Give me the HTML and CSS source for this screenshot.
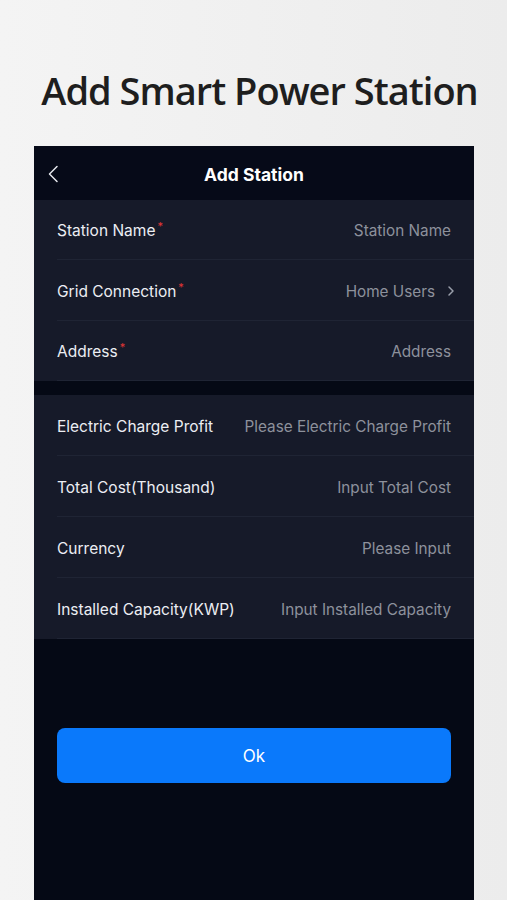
FILE: index.html
```html
<!DOCTYPE html>
<html lang="en">
<head>
  <meta charset="UTF-8" />
  <title>Add Smart Power Station</title>
  <meta name="viewport" content="width=device-width, initial-scale=1" />
  <link rel="stylesheet" href="styles.css">
</head>
<body>
  <h1 class="promo-title">Add Smart Power Station</h1>

  <div class="phone">
    <div class="topbar">
      <svg class="back" width="12" height="18" viewBox="0 0 12 18"><path d="M10 1.5 L2.5 9 L10 16.5" fill="none" stroke="#e6e8ee" stroke-width="1.5" stroke-linecap="round" stroke-linejoin="round"/></svg>
      <span class="topbar-title">Add Station</span>
    </div>

    <div class="group group-required">
      <div class="row">
        <span class="label">Station Name<sup class="req">*</sup></span>
        <span class="value">Station Name</span>
      </div>
      <div class="row">
        <span class="label">Grid Connection<sup class="req">*</sup></span>
        <span class="value">Home Users
          <svg class="chev" width="8" height="12" viewBox="0 0 8 12"><path d="M2 2 L6 6 L2 10" fill="none" stroke="#9a9fab" stroke-width="1.5" stroke-linecap="round" stroke-linejoin="round"/></svg>
        </span>
      </div>
      <div class="row">
        <span class="label">Address<sup class="req">*</sup></span>
        <span class="value">Address</span>
      </div>
    </div>

    <div class="group">
      <div class="row">
        <span class="label">Electric Charge Profit</span>
        <span class="value">Please Electric Charge Profit</span>
      </div>
      <div class="row">
        <span class="label">Total Cost(Thousand)</span>
        <span class="value">Input Total Cost</span>
      </div>
      <div class="row">
        <span class="label">Currency</span>
        <span class="value">Please Input</span>
      </div>
      <div class="row">
        <span class="label">Installed Capacity(KWP)</span>
        <span class="value">Input Installed Capacity</span>
      </div>
    </div>

    <div class="actions">
      <button class="ok-btn">Ok</button>
    </div>
  </div>
</body>
</html>
```

FILE: styles.css
```css
* { box-sizing: border-box; }
body {
  margin: 0; height: 900px; overflow: hidden;
  background: linear-gradient(to right, #f4f4f4, #ececec);
  font-family: Inter, 'Noto Sans', sans-serif;
}
.promo-title {
  margin: 0; padding: 64px 0 0 12px; height: 146px;
  text-align: center; font-family: 'Open Sans', sans-serif;
  font-size: 38px; font-weight: 600; color: #1e1e1e;
  letter-spacing: -1px;
}
.phone {
  width: 440px; margin-left: 34px; height: 754px;
  background: #050915;
}
.topbar {
  height: 54px; display: flex; align-items: center; justify-content: center;
  position: relative; background: #060a18;
}
.back { position: absolute; left: 13px; top: 19px; }
.topbar-title { color: #fff; font-size: 17.5px; font-weight: 700; padding-top: 3px; }
.group {
  background: #161a29; margin-bottom: 14px;
}
.group-required .row { height: 60.4px; }
.row {
  height: 61px; margin-left: 23px; padding: 2px 23px 0 0;
  display: flex; align-items: center; justify-content: space-between;
  border-bottom: 1px solid #1f2434;
}
.label { color: #eceef3; font-size: 15.5px; }
.req { color: #e03535; font-size: 11px; vertical-align: 6px; margin-left: 2px; line-height: 0; }
.value { color: #8d919c; font-size: 15.3px; display: flex; align-items: center; }
.chev { margin-left: 12px; margin-right: -4px; }
.actions { padding: 75px 23px 0; }
.ok-btn {
  width: 100%; height: 55px; border: none; border-radius: 8px;
  background: #0a79fb; color: #fff; font-size: 17px;
  font-family: Inter, 'Noto Sans', sans-serif;
}
```
